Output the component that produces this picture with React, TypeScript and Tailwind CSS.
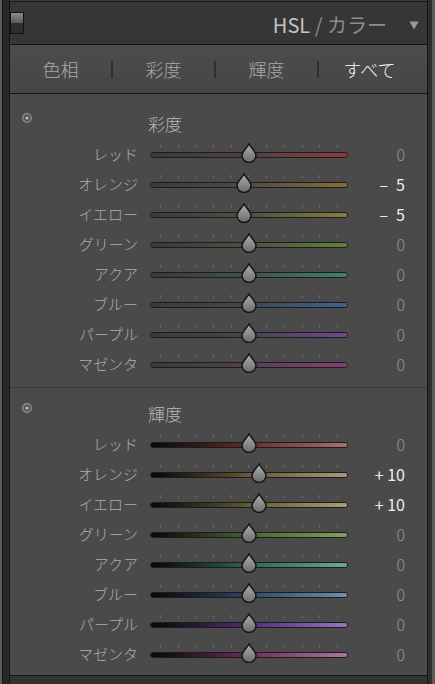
import React from 'react';

type Row = { label: string; value: number; track: string };

const saturation: Row[] = [
  { label: 'レッド', value: 0, track: 'from-[#3a3a3a] via-[#524242] to-[#8c3838]' },
  { label: 'オレンジ', value: -5, track: 'from-[#3a3a3a] via-[#524c40] to-[#8a6c34]' },
  { label: 'イエロー', value: -5, track: 'from-[#3a3a3a] via-[#51503f] to-[#86803a]' },
  { label: 'グリーン', value: 0, track: 'from-[#3a3a3a] via-[#4a5240] to-[#62803a]' },
  { label: 'アクア', value: 0, track: 'from-[#3a3a3a] via-[#40524d] to-[#3a8070]' },
  { label: 'ブルー', value: 0, track: 'from-[#3a3a3a] via-[#404952] to-[#3a6290]' },
  { label: 'パープル', value: 0, track: 'from-[#3a3a3a] via-[#4a4352] to-[#70468e]' },
  { label: 'マゼンタ', value: 0, track: 'from-[#3a3a3a] via-[#514250] to-[#8a3a76]' },
];

const luminance: Row[] = [
  { label: 'レッド', value: 0, track: 'from-[#080808] via-[#682c2c] to-[#a87070]' },
  { label: 'オレンジ', value: 10, track: 'from-[#080808] via-[#6c5634] to-[#ac9878]' },
  { label: 'イエロー', value: 10, track: 'from-[#080808] via-[#625c30] to-[#a8a072]' },
  { label: 'グリーン', value: 0, track: 'from-[#080808] via-[#4a662c] to-[#829e60]' },
  { label: 'アクア', value: 0, track: 'from-[#080808] via-[#2e645a] to-[#70a496]' },
  { label: 'ブルー', value: 0, track: 'from-[#080808] via-[#2e486a] to-[#708eb0]' },
  { label: 'パープル', value: 0, track: 'from-[#080808] via-[#562c78] to-[#9a74bc]' },
  { label: 'マゼンタ', value: 0, track: 'from-[#080808] via-[#6c2c5e] to-[#ac769e]' },
];

const formatValue = (v: number) => {
  if (v === 0) return '0';
  return v < 0 ? `–\u2002${Math.abs(v)}` : `+ ${v}`;
};

const Thumb = ({ value }: { value: number }) => (
  <svg
    className="absolute top-[5px]"
    style={{ left: 99 + value * 0.99 - 8 }}
    width="16"
    height="20"
    viewBox="0 0 16 20"
  >
    <defs>
      <linearGradient id="thumbFill" x1="0" y1="0" x2="0" y2="1">
        <stop offset="0" stopColor="#b0b0b0" />
        <stop offset="1" stopColor="#6a6a6a" />
      </linearGradient>
    </defs>
    <path
      d="M8 1 C9.5 4.5 15 8.5 15 12.5 A7 7 0 0 1 1 12.5 C1 8.5 6.5 4.5 8 1 Z"
      fill="url(#thumbFill)"
      stroke="#151515"
      strokeWidth="1.5"
    />
  </svg>
);

const Slider = ({ value, track }: { value: number; track: string }) => (
  <div className="relative ml-[12px] h-full w-[198px]">
    <div className="flex justify-between px-[10px] pt-[7px]">
      {Array.from({ length: 11 }).map((_, i) => (
        <div key={i} className="h-[3px] w-px bg-[#686868]" />
      ))}
    </div>
    <div className="mt-[4px] h-[6px] rounded-full border border-[#1c1c1c]">
      <div className={`h-full w-full rounded-full bg-linear-to-r ${track}`} />
    </div>
    <Thumb value={value} />
  </div>
);

const SliderRow = ({ row }: { row: Row }) => (
  <div className="flex h-[30px] items-center">
    <div className="w-[128px] text-right text-[15px] font-light leading-none text-[#adadad]">{row.label}</div>
    <Slider value={row.value} track={row.track} />
    <div
      className={`w-[57px] pt-[2px] text-right text-[16px] leading-none ${
        row.value === 0 ? 'font-light text-[#9099a1]' : 'text-[#eeeeee]'
      }`}
    >
      {formatValue(row.value)}
    </div>
  </div>
);

const TargetIcon = () => (
  <svg width="10" height="10" viewBox="0 0 10 10">
    <circle cx="5" cy="5" r="4.3" fill="#555" stroke="#929292" strokeWidth="1.2" />
    <circle cx="5" cy="5" r="1.6" fill="#b8b8b8" />
  </svg>
);

const Section = ({ title, rows }: { title: string; rows: Row[] }) => (
  <div>
    <div className="flex h-[30px]">
      <div className="w-[128px] pl-[12px] pt-[5px]">
        <TargetIcon />
      </div>
      <div className="ml-[10px] self-center text-[17px] font-light leading-none text-[#b8b8b8]">{title}</div>
    </div>
    {rows.map((r) => (
      <SliderRow key={r.label} row={r} />
    ))}
  </div>
);

const tabs = ['色相', '彩度', '輝度', 'すべて'];

export default function App() {
  return (
    <div className="flex h-[684px] w-[435px] overflow-hidden bg-[#2c2c2c] font-['Noto_Sans_CJK_JP','Noto_Sans',sans-serif]">
      <div className="w-[2px] bg-[#5c5c5c]" />
      <div className="w-px bg-[#141414]" />
      <div className="w-[6px] bg-[#282828]" />

      <div className="flex w-[419px] flex-col border-x border-[#151515]">
        <div className="h-px bg-[#3a3a3a]" />
        <div className="h-px bg-[#1a1a1a]" />

        <div className="flex h-[42px] items-start bg-[#363636] pt-[10px]">
          <div className="flex h-[22px] w-[14px] flex-col overflow-hidden border border-[#111]">
            <div className="h-[10px] bg-linear-to-b from-[#8c8c8c] to-[#5a5a5a]" />
            <div className="flex-1 bg-[#2e2e2e]" />
          </div>
          <div className="ml-auto flex items-center pt-[3px]">
            <span className="text-[20px] leading-none text-[#c4c4c4]">HSL</span>
            <span className="text-[20px] leading-none text-[#8c8c8c]">&nbsp;/ カラー</span>
            <svg className="ml-[22px] mr-[8px]" width="10" height="9" viewBox="0 0 10 9">
              <path d="M0.5 0.5 H9.5 L5 8.5 Z" fill="#9a9a9a" />
            </svg>
          </div>
        </div>

        <div className="flex h-[50px] items-center border-y border-[#151515] bg-linear-to-b from-[#4c4c4c] to-[#464646]">
          {tabs.map((t, i) => (
            <React.Fragment key={t}>
              {i > 0 && <div className="h-[17px] w-[2px] bg-[#2d3137]" />}
              <div
                className={`w-[101px] text-center text-[18px] font-light leading-none ${
                  i === 3 ? 'text-[#f4f4f4]' : 'text-[#a8a8a8]'
                }`}
              >
                {t}
              </div>
            </React.Fragment>
          ))}
        </div>

        <div className="flex flex-col border-b border-[#151515] bg-[#4a4a4a]">
          <div className="pb-[9px] pt-[14px]">
            <Section title="彩度" rows={saturation} />
          </div>
          <div className="h-px bg-[#3a3a3a]" />
          <div className="pb-[7px] pt-[10px]">
            <Section title="輝度" rows={luminance} />
          </div>
        </div>
        <div className="flex-1 bg-[#333]" />
      </div>

      <div className="w-[4px] bg-[#2e2e2e]" />
      <div className="w-[3px] bg-[#5a5a5a]" />
    </div>
  );
}
